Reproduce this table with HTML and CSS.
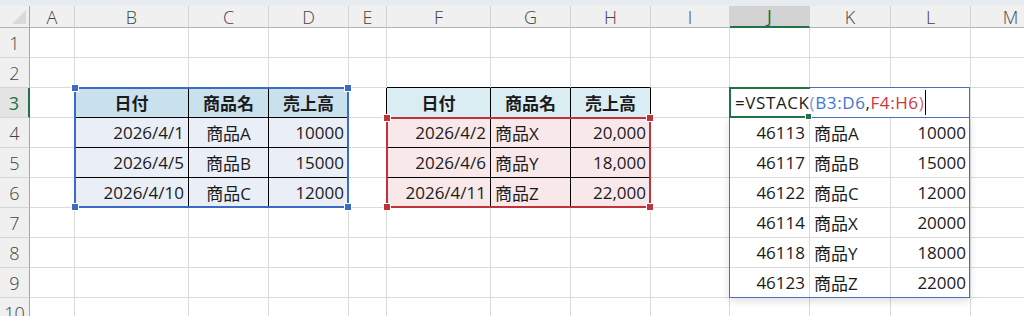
FILE: index.html
```html
<!DOCTYPE html>
<html lang="ja">
<head>
    <meta charset="UTF-8">
    <meta name="viewport" content="width=device-width, initial-scale=1.0">
    <title>VSTACK</title>
    <link rel="stylesheet" href="styles.css">
</head>
<body>
    <div class="topbar"></div>

    <div class="wrap">
        <div class="sheet">
            <!-- column headers -->
            <div class="corner"><div class="tri"></div></div>
            <div class="ch">A</div>
            <div class="ch">B</div>
            <div class="ch">C</div>
            <div class="ch">D</div>
            <div class="ch">E</div>
            <div class="ch">F</div>
            <div class="ch">G</div>
            <div class="ch">H</div>
            <div class="ch">I</div>
            <div class="ch sel">J</div>
            <div class="ch">K</div>
            <div class="ch">L</div>
            <div class="ch">M</div>

            <!-- row 1 -->
            <div class="rh">1</div>
            <div class="c"></div><div class="c"></div><div class="c"></div><div class="c"></div>
            <div class="c"></div><div class="c"></div><div class="c"></div><div class="c"></div>
            <div class="c"></div><div class="c"></div><div class="c"></div><div class="c"></div>
            <div class="c"></div>

            <!-- row 2 -->
            <div class="rh">2</div>
            <div class="c"></div><div class="c"></div><div class="c"></div><div class="c"></div>
            <div class="c"></div>
            <div class="c bb"></div><div class="c bb"></div><div class="c bb"></div>
            <div class="c"></div><div class="c"></div><div class="c"></div><div class="c"></div>
            <div class="c"></div>

            <!-- row 3 -->
            <div class="rh sel">3</div>
            <div class="c"></div>
            <div class="c t1h ctr br bb">日付</div>
            <div class="c t1h ctr br bb">商品名</div>
            <div class="c t1h ctr br bb">売上高</div>
            <div class="c br"></div>
            <div class="c t2h ctr br bb">日付</div>
            <div class="c t2h ctr br bb">商品名</div>
            <div class="c t2h ctr br bb">売上高</div>
            <div class="c"></div>
            <div class="c"></div><div class="c"></div><div class="c"></div>
            <div class="c"></div>

            <!-- row 4 -->
            <div class="rh">4</div>
            <div class="c"></div>
            <div class="c t1d r br bb">2026/4/1</div>
            <div class="c t1d ctr br bb">商品A</div>
            <div class="c t1d r br bb">10000</div>
            <div class="c"></div>
            <div class="c t2d r br bb">2026/4/2</div>
            <div class="c t2d br bb">商品X</div>
            <div class="c t2d r br bb">20,000</div>
            <div class="c"></div>
            <div class="c r">46113</div>
            <div class="c">商品A</div>
            <div class="c r">10000</div>
            <div class="c"></div>

            <!-- row 5 -->
            <div class="rh">5</div>
            <div class="c"></div>
            <div class="c t1d r br bb">2026/4/5</div>
            <div class="c t1d ctr br bb">商品B</div>
            <div class="c t1d r br bb">15000</div>
            <div class="c"></div>
            <div class="c t2d r br bb">2026/4/6</div>
            <div class="c t2d br bb">商品Y</div>
            <div class="c t2d r br bb">18,000</div>
            <div class="c"></div>
            <div class="c r">46117</div>
            <div class="c">商品B</div>
            <div class="c r">15000</div>
            <div class="c"></div>

            <!-- row 6 -->
            <div class="rh">6</div>
            <div class="c"></div>
            <div class="c t1d r br">2026/4/10</div>
            <div class="c t1d ctr br">商品C</div>
            <div class="c t1d r br">12000</div>
            <div class="c"></div>
            <div class="c t2d r br">2026/4/11</div>
            <div class="c t2d br">商品Z</div>
            <div class="c t2d r br">22,000</div>
            <div class="c"></div>
            <div class="c r">46122</div>
            <div class="c">商品C</div>
            <div class="c r">12000</div>
            <div class="c"></div>

            <!-- row 7 -->
            <div class="rh">7</div>
            <div class="c"></div><div class="c"></div><div class="c"></div><div class="c"></div>
            <div class="c"></div><div class="c"></div><div class="c"></div><div class="c"></div>
            <div class="c"></div>
            <div class="c r">46114</div>
            <div class="c">商品X</div>
            <div class="c r">20000</div>
            <div class="c"></div>

            <!-- row 8 -->
            <div class="rh">8</div>
            <div class="c"></div><div class="c"></div><div class="c"></div><div class="c"></div>
            <div class="c"></div><div class="c"></div><div class="c"></div><div class="c"></div>
            <div class="c"></div>
            <div class="c r">46118</div>
            <div class="c">商品Y</div>
            <div class="c r">18000</div>
            <div class="c"></div>

            <!-- row 9 -->
            <div class="rh">9</div>
            <div class="c"></div><div class="c"></div><div class="c"></div><div class="c"></div>
            <div class="c"></div><div class="c"></div><div class="c"></div><div class="c"></div>
            <div class="c"></div>
            <div class="c r">46123</div>
            <div class="c">商品Z</div>
            <div class="c r">22000</div>
            <div class="c"></div>

            <!-- row 10 -->
            <div class="rh">10</div>
            <div class="c"></div><div class="c"></div><div class="c"></div><div class="c"></div>
            <div class="c"></div><div class="c"></div><div class="c"></div><div class="c"></div>
            <div class="c"></div><div class="c"></div><div class="c"></div><div class="c"></div>
            <div class="c"></div>
        </div>

        <!-- selections, spill range and the formula being edited -->
        <div class="layer">
            <div class="spill"></div>
            <div class="active"><i class="fill"></i></div>
            <div class="editor">
                <span class="fx">=VSTACK<span class="p1">(</span><span class="ref-b">B3:D6</span>,<span class="ref-r">F4:H6</span><span class="p2">)</span></span><span class="caret"></span>
            </div>
            <div class="range blue">
                <i class="h tl"></i><i class="h tr"></i><i class="h bl"></i><i class="h br-h"></i>
            </div>
            <div class="range red">
                <i class="h tl"></i><i class="h tr"></i><i class="h bl"></i><i class="h br-h"></i>
            </div>
        </div>
    </div>
</body>
</html>
```

FILE: styles.css
```css
body {
    margin: 0;
    overflow: hidden;
    background: #fff;
    font-family: "Open Sans", "Noto Sans CJK JP", sans-serif;
    color: #1b1b1b;
}
.topbar {
    height: 6px;
    background: #e8ebef;
}
.wrap {
    position: relative;
}
.sheet,
.layer {
    display: grid;
    grid-template-columns: 30px 45px 114px 80px 80px 38px 104px 80px 80px 79px 80px 81px 80px 80px;
    grid-template-rows: 22px repeat(10, 30px);
}
.layer {
    position: absolute;
    inset: 0;
    pointer-events: none;
}

/* headers */
.corner {
    background: #f0f0f0;
    border-right: 1px solid #a6a6a6;
    border-bottom: 1px solid #b4b4b4;
    box-sizing: border-box;
    position: relative;
}
.tri {
    position: absolute;
    right: 3px;
    bottom: 3px;
    width: 14px;
    height: 14px;
    background: #d9d9d9;
    clip-path: polygon(100% 0, 100% 100%, 0 100%);
}
.ch,
.rh {
    background: #f0f0f0;
    color: #444;
    font-size: 18px;
    font-weight: 300;
    display: flex;
    align-items: center;
    justify-content: center;
    box-sizing: border-box;
}
.ch {
    border-right: 1px solid #d4d4d4;
    border-bottom: 1px solid #b4b4b4;
}
.ch.sel {
    background: #d3d3d3;
    color: #1d6b40;
    font-weight: 400;
    border-bottom: 2px solid #217346;
}
.rh {
    border-right: 1px solid #a6a6a6;
    border-bottom: 1px solid #d4d4d4;
}
.rh.sel {
    background: #e4e4e4;
    color: #217346;
    font-weight: 400;
    border-right: 2px solid #217346;
}

/* cells */
.c {
    border-right: 1px solid #dadada;
    border-bottom: 1px solid #dadada;
    box-sizing: border-box;
    display: flex;
    align-items: center;
    padding: 0 4px;
    font-size: 17px;
    white-space: nowrap;
    overflow: hidden;
}
.r {
    justify-content: flex-end;
}
.ctr {
    justify-content: center;
}
.br {
    border-right-color: #000;
}
.bb {
    border-bottom-color: #000;
}
.t1h {
    background: #c9e0ed;
    font-weight: 700;
}
.t1d {
    background: #e9eef7;
}
.t2h {
    background: #daedf3;
    font-weight: 700;
}
.t2d {
    background: #f8e8e9;
}

/* overlays */
.range {
    grid-row: 4 / 8;
    grid-column: 3 / 6;
    margin: -1px 0 0 -1px;
    border: 2px solid #3a6bc5;
    position: relative;
}
.range.red {
    grid-row: 5 / 8;
    grid-column: 7 / 10;
    border-color: #c1333b;
}
.h {
    position: absolute;
    width: 6px;
    height: 6px;
    background: #3a6bc5;
    box-shadow: 0 0 0 1px #fff;
}
.red .h {
    background: #c1333b;
}
.tl { left: -4px; top: -4px; }
.tr { right: -4px; top: -4px; }
.bl { left: -4px; bottom: -4px; }
.br-h { right: -4px; bottom: -4px; }

.spill {
    grid-row: 5 / 11;
    grid-column: 11 / 14;
    margin: -1px 1px 0 -1px;
    border: 1px solid #4a6fbd;
    box-shadow: 0 3px 8px rgba(0, 0, 0, 0.13);
}

/* in-cell editor box over J3:L3, with the green active-cell frame on J3 */
.active {
    grid-row: 4;
    grid-column: 11 / 14;
    margin: -1px 1px 0 -1px;
    border: 1px solid #4a6fbd;
    background: #fff;
    position: relative;
}
.active::before {
    content: "";
    position: absolute;
    left: -1px;
    top: -1px;
    width: 81px;
    height: 31px;
    border: 2px solid #217346;
    border-right: none;
    box-sizing: border-box;
}
.fill {
    position: absolute;
    left: 76px;
    top: 26px;
    width: 5px;
    height: 5px;
    background: #217346;
    box-shadow: 0 0 0 1px #fff;
}
.editor {
    grid-row: 4;
    grid-column: 11 / 14;
    margin: -1px 1px 0 -1px;
    position: relative;
    display: flex;
    align-items: center;
    padding-left: 6px;
    font-size: 17px;
    white-space: nowrap;
}
.fx {
    letter-spacing: 0.6px;
}
.p1 { color: #7b9bd6; }
.ref-b { color: #3d75d6; }
.ref-r { color: #d0343d; }
.p2 { color: #cf6b72; }
.caret {
    display: inline-block;
    width: 1px;
    height: 25px;
    background: #000;
    margin-left: 1px;
}
```
